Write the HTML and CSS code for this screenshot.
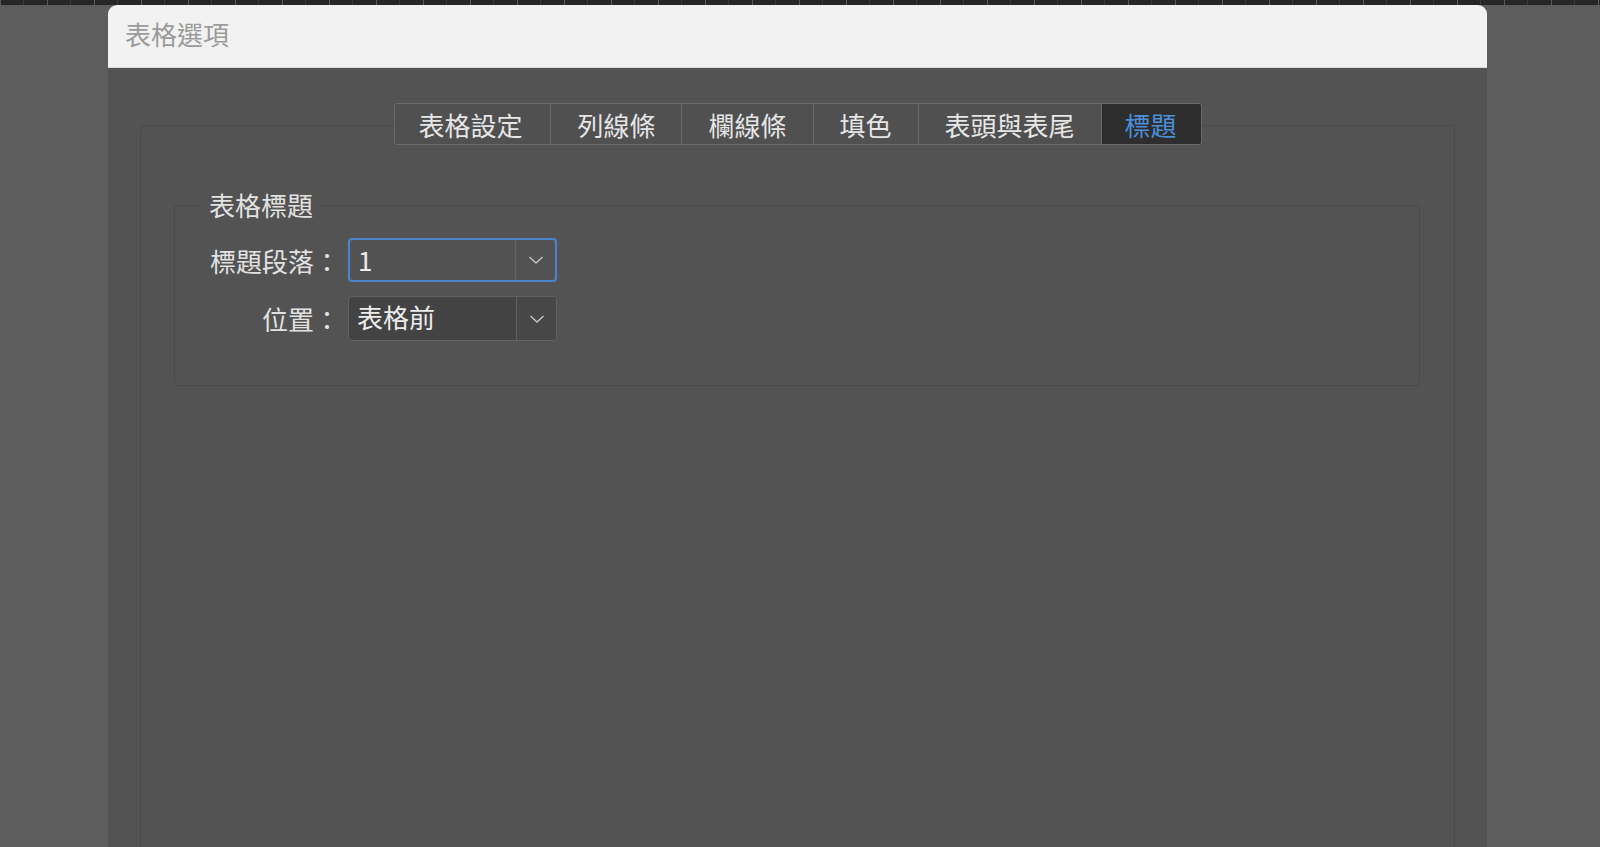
FILE: index.html
```html
<!DOCTYPE html>
<html lang="zh-Hant">
<head>
<meta charset="utf-8">
<title>表格選項</title>
<link rel="stylesheet" href="styles.css">
</head>
<body>
<div class="page">
  <div class="ruler"></div>
  <div class="stage">
    <div class="dialog">
      <div class="titlebar">表格選項</div>
      <div class="dialog-body">
        <div class="panel">
          <div class="tabs-wrap">
            <div class="tabs">
              <div class="tab first">表格設定</div>
              <div class="tab">列線條</div>
              <div class="tab">欄線條</div>
              <div class="tab">填色</div>
              <div class="tab">表頭與表尾</div>
              <div class="tab active">標題</div>
            </div>
          </div>
          <fieldset class="group">
            <legend class="group-title">表格標題</legend>
            <div class="rows">
              <div class="form-row">
                <span class="label">標題段落：</span>
                <div class="select focus">
                  <span class="value">1</span>
                  <span class="arrow"><svg width="16" height="10" viewBox="0 0 16 10"><polyline points="1.5,2 8,8 14.5,2" fill="none" stroke="#c4c4c4" stroke-width="1.4"/></svg></span>
                </div>
              </div>
              <div class="form-row">
                <span class="label">位置：</span>
                <div class="select dark">
                  <span class="value">表格前</span>
                  <span class="arrow"><svg width="16" height="10" viewBox="0 0 16 10"><polyline points="1.5,2 8,8 14.5,2" fill="none" stroke="#c4c4c4" stroke-width="1.4"/></svg></span>
                </div>
              </div>
            </div>
          </fieldset>
        </div>
      </div>
    </div>
  </div>
</div>
</body>
</html>
```

FILE: styles.css
```css
* { box-sizing: border-box; }
html, body {
  margin: 0;
  padding: 0;
  height: 847px;
  overflow: hidden;
}
body {
  background: #5d5d5d;
  font-family: "Noto Sans CJK TC", "Noto Sans", sans-serif;
  font-size: 26px;
  color: #e2e2e2;
}
.page {
  display: flex;
  flex-direction: column;
  height: 847px;
}
.ruler {
  height: 5px;
  flex: none;
  background-color: #262626;
  background-image:
    repeating-linear-gradient(to right, #5a5a5a 0 1px, transparent 1px 47px),
    repeating-linear-gradient(to right, transparent 0 23px, #3c3c3c 23px 24px, transparent 24px 47px);
}
.stage {
  flex: 1;
  display: flex;
  background: #5d5d5d;
}
.dialog {
  margin-left: 108px;
  width: 1379px;
  display: flex;
  flex-direction: column;
  background: #535353;
  border-radius: 9px 9px 0 0;
}
.titlebar {
  height: 63px;
  flex: none;
  background: #f2f2f2;
  border-radius: 9px 9px 0 0;
  border-bottom: 1px solid #dcdcdc;
  padding-left: 17px;
  line-height: 58px;
  color: #9b9b9b;
  font-size: 26px;
}
.dialog-body {
  flex: 1;
  display: flex;
  flex-direction: column;
  padding: 57px 32px 0 32px;
}
.panel {
  flex: 1;
  border: 1px solid #4a4a4a;
  border-bottom: none;
  border-radius: 4px 4px 0 0;
  display: flex;
  flex-direction: column;
}
.tabs-wrap {
  display: flex;
  justify-content: center;
  margin-top: -23px;
}
.tabs {
  display: flex;
  height: 42px;
  border: 1px solid #6a6a6a;
  border-radius: 3px;
  background: #505050;
  overflow: hidden;
  margin-left: 1px;
}
.tab {
  padding: 0 26px;
  line-height: 42px;
  color: #e6e6e6;
  border-left: 1px solid #6a6a6a;
  white-space: nowrap;
}
.tab.first {
  border-left: none;
  padding: 0 28px 0 23px;
}
.tab.active {
  background: #2d2d2d;
  color: #4a8fd8;
  padding: 0 24px 0 23px;
}
.group {
  margin: 45px 34px 0 33px;
  padding: 0;
  border: 1px solid #4a4a4a;
  border-radius: 3px;
  min-width: 0;
}
.group-title {
  margin-left: 28px;
  padding: 0 6px;
  line-height: 30px;
  color: #e2e2e2;
}
.rows {
  display: flex;
  flex-direction: column;
  gap: 14px;
  padding: 18px 0 44px 0;
}
.form-row {
  display: flex;
  align-items: center;
  gap: 8px;
}
.label {
  width: 165px;
  text-align: right;
  color: #e2e2e2;
  white-space: nowrap;
}
.select {
  width: 209px;
  height: 44px;
  display: flex;
  border-radius: 4px;
  border: 1px solid #626262;
  background: #4f4f4f;
  overflow: hidden;
}
.select.focus {
  border: 2px solid #4a84cc;
  background: #525252;
}
.select.dark {
  height: 45px;
  background: #434343;
}
.value {
  flex: 1;
  padding-left: 8px;
  line-height: 40px;
  color: #ececec;
}
.arrow {
  width: 40px;
  border-left: 1px solid #626262;
  display: flex;
  align-items: center;
  justify-content: center;
}
.select.dark .arrow { background: #474747; }
```
